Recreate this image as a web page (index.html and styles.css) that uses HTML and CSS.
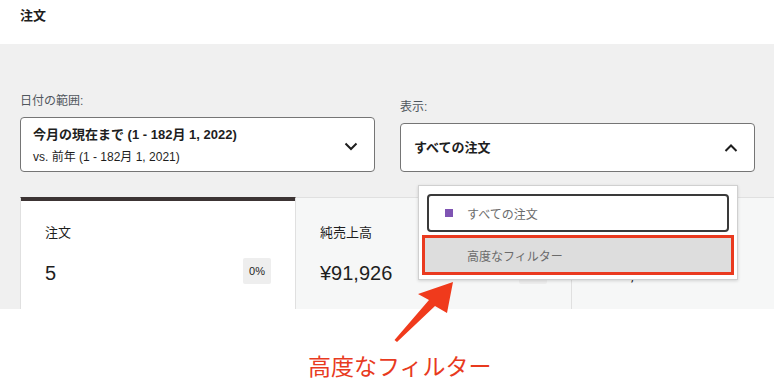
FILE: index.html
```html
<!DOCTYPE html>
<html lang="ja">
<head>
  <meta charset="UTF-8" />
  <meta name="viewport" content="width=device-width, initial-scale=1" />
  <title>注文</title>
  <link rel="stylesheet" href="styles.css">
</head>
<body>
  <header class="page-header">
    <h1>注文</h1>
  </header>

  <section class="report">
    <div class="filters">
      <div class="filter">
        <label class="filter-label">日付の範囲:</label>
        <button class="select select-date" aria-expanded="false">
          <span class="select-text">
            <strong>今月の現在まで (1 - 182月 1, 2022)</strong>
            <span class="compare">vs. 前年 (1 - 182月 1, 2021)</span>
          </span>
          <svg class="chevron" width="24" height="24" viewBox="0 0 24 24"><polyline points="6.5,9.5 12,15 17.5,9.5" /></svg>
        </button>
      </div>

      <div class="filter filter-show">
        <label class="filter-label">表示:</label>
        <button class="select select-show" aria-expanded="true">
          <strong>すべての注文</strong>
          <svg class="chevron" width="24" height="24" viewBox="0 0 24 24"><polyline points="6.5,15 12,9.5 17.5,15" /></svg>
        </button>

        <!-- open menu -->
        <div class="dropdown" role="listbox">
          <div class="option option-selected" role="option">
            <span class="swatch"></span>すべての注文
          </div>
          <div class="option option-marked" role="option">高度なフィルター</div>
        </div>
      </div>
    </div>

    <div class="cards">
      <div class="card card-active">
        <div class="card-label">注文</div>
        <div class="card-row">
          <span class="card-value">5</span>
          <span class="badge">0%</span>
        </div>
      </div>
      <div class="card">
        <div class="card-label">純売上高</div>
        <div class="card-row">
          <span class="card-value">¥91,926</span>
          <span class="badge">0%</span>
        </div>
      </div>
      <div class="card">
        <div class="card-label">平均注文額</div>
        <div class="card-row">
          <span class="card-value">¥18,385</span>
        </div>
      </div>
    </div>
  </section>

  <section class="annotation">
    <svg class="arrow" width="70" height="70" viewBox="0 0 70 70">
      <polygon points="63,4 57,35 45,28 7,64 4.5,62 39,22 28,16" />
    </svg>
    <p class="annotation-text">高度なフィルター</p>
  </section>
</body>
</html>
```

FILE: styles.css
```css
body {
  margin: 0;
  font-family: "Liberation Sans", "Noto Sans CJK JP", sans-serif;
  color: #1e1e1e;
  background: #fff;
  overflow: hidden;
}

.page-header {
  height: 44px;
  box-sizing: border-box;
  padding: 7px 20px 0;
  background: #fff;
}
.page-header h1 {
  margin: 0;
  font-size: 13px;
  line-height: 18px;
  font-weight: bold;
}

.report {
  background: #f0f0f0; /* grey page area */
  padding: 49px 0 0 20px;
  overflow: hidden;
}

.filters {
  display: flex;
  align-items: flex-end;
  gap: 25px;
}
.filter {
  width: 355px;
  display: flex;
  flex-direction: column;
}
.filter-show {
  position: relative;
}
.filter-label {
  font-size: 12px;
  line-height: 16px;
  color: #50575e;
  margin-bottom: 8px;
}

.select {
  display: flex;
  align-items: center;
  justify-content: space-between;
  width: 100%;
  box-sizing: border-box;
  background: #fff;
  border: 1px solid #757575;
  border-radius: 4px;
  font-family: inherit;
  color: #1e1e1e;
  text-align: left;
  cursor: pointer;
}
.select-date {
  height: 55px;
  padding: 6px 11px 3px 12px;
}
.select-show {
  height: 49px;
  padding: 0 11px 0 13px;
}
.select strong {
  font-size: 13px;
  line-height: 20px;
  font-weight: bold;
}
.select-text {
  display: flex;
  flex-direction: column;
  gap: 2px;
}
.compare {
  font-size: 12px;
  line-height: 20px;
}
.chevron polyline {
  fill: none;
  stroke: #1e1e1e;
  stroke-width: 2;
}

.dropdown {
  position: absolute;
  left: 18px;
  top: 100%;
  margin-top: 13px;
  width: 320px;
  box-sizing: border-box;
  padding: 8px 8px 7px;
  background: #fff;
  border: 1px solid #d0d0d0;
  box-shadow: 0 1px 3px rgba(0, 0, 0, 0.15);
  z-index: 5;
}
.option {
  display: flex;
  align-items: center;
  font-size: 12px;
  color: #6b6b6b;
  box-sizing: border-box;
}
.option-selected {
  height: 38px;
  padding-left: 16px;
  gap: 14px;
  border: 2px solid #3a3a3a;
  border-radius: 4px;
}
.swatch {
  width: 8px;
  height: 8px;
  background: #7f54b3;
}
.option-marked {
  height: 34px;
  margin: 6px -2px 0;
  padding-left: 42px;
  background: #dddddd;
  outline: 3px solid #ea3a1f;
}

.cards {
  display: flex;
  margin-top: 25px;
}
.card {
  flex: 0 0 276px;
  box-sizing: border-box;
  padding: 26px 24px 25px;
  background: #f6f7f7;
  border-top: 1px solid #e0e0e0;
  border-right: 1px solid #e0e0e0;
}
.card-active {
  background: #fff;
  border-left: 1px solid #e0e0e0;
  border-top-color: #3c3434;
  box-shadow: inset 0 3px 0 #3c3434;
}
.card-label {
  font-size: 13px;
  line-height: 18px;
}
.card-row {
  display: flex;
  align-items: center;
  justify-content: space-between;
  margin-top: 16px;
  height: 26px;
}
.card-value {
  font-size: 20px;
  line-height: 26px;
  padding-top: 3px;
}
.badge {
  font-size: 11px;
  line-height: 26px;
  padding: 0 6px;
  background: #eeeeee;
  border-radius: 2px;
  color: #1e1e1e;
}

.annotation {
  position: relative;
  padding: 42px 0 0 308px;
}
.arrow {
  position: absolute;
  left: 390px;
  top: -31px;
}
.arrow polygon {
  fill: #f03a1c;
}
.annotation-text {
  margin: 0;
  font-family: "Noto Sans CJK JP", sans-serif;
  font-size: 23px;
  line-height: 28px;
  color: #e83a1e;
}
```
